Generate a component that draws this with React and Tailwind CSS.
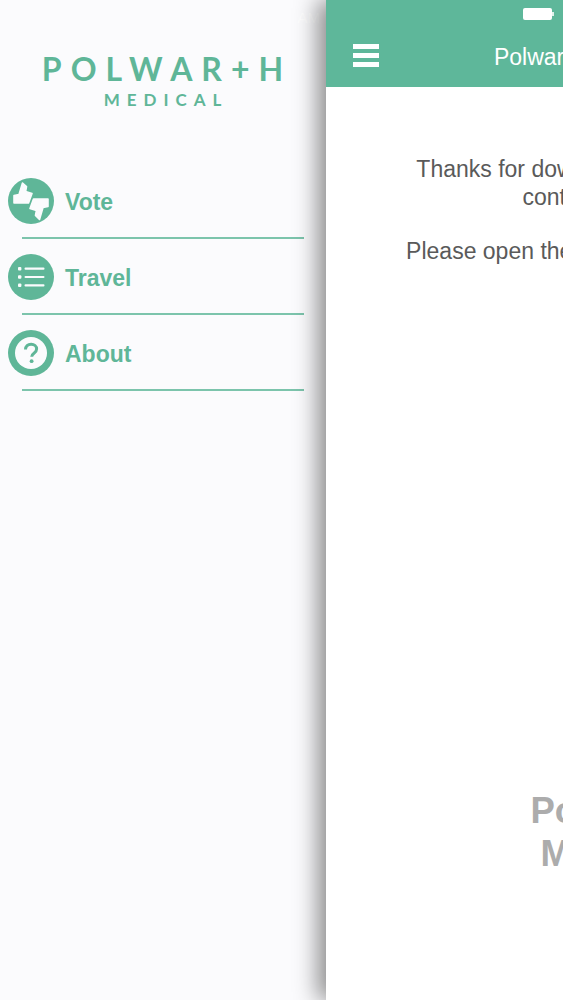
import React from "react";

const menu = [
  { label: "Vote", icon: <VoteIcon /> },
  { label: "Travel", icon: <ListIcon /> },
  { label: "About", icon: <HelpIcon /> },
];

export default function App() {
  return (
    <div className="flex h-[1000px] w-[563px] overflow-hidden bg-white font-['Liberation_Sans',Arial,sans-serif]">
      <Drawer />
      <Main />
    </div>
  );
}

function Drawer() {
  return (
    <aside className="flex w-[326px] shrink-0 flex-col bg-[#fbfbfd]">
      <div className="flex h-[28px] items-end justify-end pr-[6px] text-[15px] leading-[20px] text-white">AM</div>
      <div className="flex flex-col items-center pt-[23px] font-['Lato',sans-serif] text-[#5fb698]">
        <div className="pl-[8px] text-[32px] font-bold leading-[36px] tracking-[9px]">POLWAR+H</div>
        <div className="mt-[3px] pl-[6px] text-[17px] font-bold leading-[20px] tracking-[7px]">MEDICAL</div>
      </div>
      <nav className="mt-[53px] flex flex-col">
        {menu.map((item) => (
          <MenuRow key={item.label} {...item} />
        ))}
      </nav>
    </aside>
  );
}

function MenuRow({ label, icon }) {
  return (
    <div className="relative flex h-[76px] items-center gap-[11px] pl-[8px]">
      <div className="h-[46px] w-[46px] shrink-0">{icon}</div>
      <span className="pt-[3px] text-[23px] font-bold text-[#5fb698]">{label}</span>
      <div className="absolute bottom-0 left-[22px] right-[22px] h-[2px] bg-[#7cc4ac]" />
    </div>
  );
}

function Main() {
  return (
    <main className="relative z-10 flex w-[563px] shrink-0 flex-col bg-white shadow-[-8px_0_22px_rgba(0,0,0,0.45)]">
      <header className="h-[87px] shrink-0 bg-[#5eb79a] text-white">
        <div className="flex h-[28px] items-center pl-[197px]">
          <div className="h-[12px] w-[29px] rounded-[2px] bg-white" />
          <div className="h-[4px] w-[2px] bg-white/80" />
        </div>
        <div className="flex h-[59px] items-start pl-[27px]">
          <div className="mt-[16px] flex w-[26px] flex-col gap-[4px]">
            <div className="h-[5px] bg-white" />
            <div className="h-[5px] bg-white" />
            <div className="h-[5px] bg-white" />
          </div>
          <div className="mt-[15px] flex-1 pr-[59px] text-center text-[23px] leading-[28px]">Polwarth Medical App</div>
        </div>
      </header>
      <div className="flex flex-1 flex-col items-center text-center">
        <p className="mt-[68px] text-[23px] leading-[28px] text-[#5a5a5a]">
          Thanks for downloading this Polwarth
          <br />
          contact the team
        </p>
        <p className="mt-[26px] text-[23px] leading-[28px] text-[#5a5a5a]">Please open the menu to find out more.</p>
        <div className="mt-auto mb-[125px] text-[36.5px] font-bold leading-[43px] text-[#acacac]">
          Polwarth
          <br />
          Medical
        </div>
      </div>
    </main>
  );
}

function VoteIcon() {
  return (
    <svg viewBox="0 0 46 46" className="h-full w-full">
      <circle cx="23" cy="23" r="23" fill="#5fb698" />
      <g fill="#fbfbfd" stroke="#fbfbfd" strokeWidth="1.6" strokeLinejoin="round">
        <path d="M6 17.5 L11 16.5 L14.5 5 L18.5 8.5 L17.6 13.5 L24 15.5 L20.5 25 L6 25 Z" />
        <path d="M40 28.5 L35 29.5 L31.5 41.5 L27.5 37.5 L28.4 32.5 L22 30.5 L25.5 21 L40 21 Z" />
      </g>
    </svg>
  );
}

function ListIcon() {
  return (
    <svg viewBox="0 0 46 46" className="h-full w-full">
      <circle cx="23" cy="23" r="23" fill="#5fb698" />
      <g fill="#fbfbfd">
        <rect x="10" y="13" width="3.4" height="3.4" rx="1" />
        <rect x="10" y="21.3" width="3.4" height="3.4" rx="1" />
        <rect x="10" y="29.6" width="3.4" height="3.4" rx="1" />
        <rect x="16.5" y="13.6" width="20" height="2.2" rx="1" />
        <rect x="16.5" y="21.9" width="20" height="2.2" rx="1" />
        <rect x="16.5" y="30.2" width="20" height="2.2" rx="1" />
      </g>
    </svg>
  );
}

function HelpIcon() {
  return (
    <svg viewBox="0 0 46 46" className="h-full w-full">
      <circle cx="23" cy="23" r="23" fill="#5fb698" />
      <circle cx="23" cy="23" r="16" fill="#fbfbfd" />
      <path
        d="M17.5 19.5c0-3.2 2.4-5.3 5.6-5.3s5.5 2 5.5 4.8c0 2-1 3.1-2.6 4.2-1.6 1.1-2.3 1.9-2.3 3.6"
        fill="none"
        stroke="#5fb698"
        strokeWidth="3"
      />
      <circle cx="23.6" cy="31.2" r="1.9" fill="#5fb698" />
    </svg>
  );
}
